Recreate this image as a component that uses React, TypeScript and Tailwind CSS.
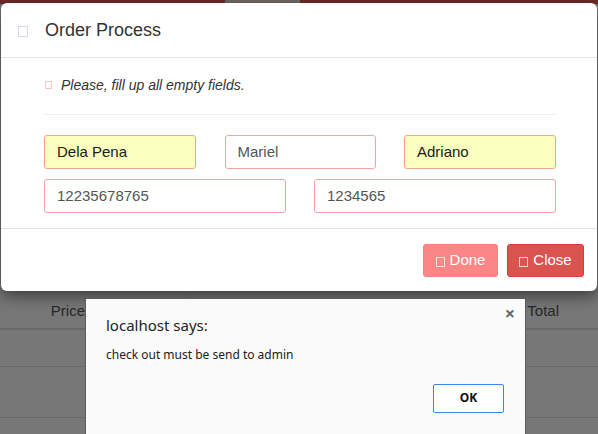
import React from "react";

function Glyph({ className }: { className: string }) {
  return <span className={`inline-block shrink-0 border ${className}`} />;
}

function Field({
  value,
  filled = false,
  className,
}: {
  value: string;
  filled?: boolean;
  className: string;
}) {
  return (
    <div
      className={`flex h-[34px] items-center rounded-[3px] border px-[12px] text-[15px] ${
        filled
          ? "border-[#f3a58c] bg-[#fafebf] text-[#1a1a1a]"
          : "border-[#f7a1a1] bg-white text-[#555]"
      } ${className}`}
    >
      {value}
    </div>
  );
}

export default function App() {
  return (
    <div className="relative h-[434px] w-[598px] overflow-hidden bg-[#777] font-['Liberation_Sans',Arial,sans-serif]">
      {/* page behind the overlay */}
      <div className="flex h-[4px]">
        <div className="w-[225px] bg-[#6f2a2a]" />
        <div className="w-[75px] bg-[#6e6a66]" />
        <div className="flex-1 bg-[#6f2a2a]" />
      </div>
      <div className="pt-[289px]">
        <div className="flex h-[37px] border-b-2 border-[#696969] text-[15px] text-[#262626]">
          <div className="flex w-[85px] items-center justify-end pt-[2px]">Price</div>
          <div className="w-[104px]" />
          <div className="w-[1px] bg-[#696969]" />
          <div className="flex flex-1 items-center justify-end pr-[39px] pt-[2px]">
            Total
          </div>
        </div>
        <div className="h-[37px] border-b border-[#696969]" />
        <div className="h-[51px] border-b border-[#696969]" />
      </div>

      {/* order modal */}
      <div className="absolute left-[1px] top-[3px] w-[596px] rounded-[6px] bg-white text-[#333] shadow-[0_5px_15px_rgba(0,0,0,0.5)]">
        <div className="flex h-[55px] items-center border-b border-[#e5e5e5] pl-[17px]">
          <Glyph className="mt-[2px] h-[11px] w-[10px] border-[#d6d6ec]" />
          <span className="ml-[17px] text-[18px] leading-none">
            Order Process
          </span>
        </div>
        <div className="pb-[15px] pl-[43px] pr-[41px] pt-[17px]">
          <div className="flex h-[20px] items-center text-[14px] italic">
            <Glyph className="ml-[1px] h-[8px] w-[7px] border-[#f6c6c0]" />
            <span className="ml-[9px]">Please, fill up all empty fields.</span>
          </div>
          <div className="mt-[19px] border-t border-[#eee]" />
          <div className="mt-[20px] flex justify-between">
            <Field value="Dela Pena" filled className="w-[152px]" />
            <Field value="Mariel" className="w-[151px]" />
            <Field value="Adriano" filled className="w-[152px]" />
          </div>
          <div className="mt-[10px] flex justify-between">
            <Field value="12235678765" className="w-[242px]" />
            <Field value="1234565" className="w-[242px]" />
          </div>
        </div>
        <div className="flex justify-end gap-[9px] border-t border-[#e5e5e5] pb-[14px] pr-[13px] pt-[15px]">
          <button className="flex h-[33px] w-[75px] items-center justify-center gap-[5px] rounded-[3px] border border-[#f57e7e] bg-[#fb8686] text-[15px] text-white">
            <Glyph className="mt-[3px] h-[10px] w-[9px] border-[#fde0e0]" />
            Done
          </button>
          <button className="flex h-[33px] w-[77px] items-center justify-center gap-[5px] rounded-[3px] border border-[#d43f3a] bg-[#d9534f] text-[15px] text-white">
            <Glyph className="mt-[3px] h-[10px] w-[9px] border-[#f3cfcd]" />
            Close
          </button>
        </div>
      </div>

      {/* browser alert */}
      <div className="absolute left-[85px] top-[298px] h-[140px] w-[441px] border border-[#5c5c5c] bg-[#fafafa] font-['Noto_Sans','Open_Sans',sans-serif]">
        <span className="absolute right-[10px] top-[5px] text-[18px] font-bold leading-none text-[#666]">
          ×
        </span>
        <div className="pl-[20px] pt-[15px] text-[15px] text-[#222]">
          localhost says:
        </div>
        <div className="pl-[20px] pt-[9px] text-[12px] text-[#222]">
          check out must be send to admin
        </div>
        <div className="flex justify-end pr-[21px] pt-[20px]">
          <button className="flex h-[29px] w-[71px] items-center justify-center rounded-[2px] border border-[#3d86f0] bg-white text-[12px] font-bold text-[#111]">
            OK
          </button>
        </div>
      </div>
    </div>
  );
}
